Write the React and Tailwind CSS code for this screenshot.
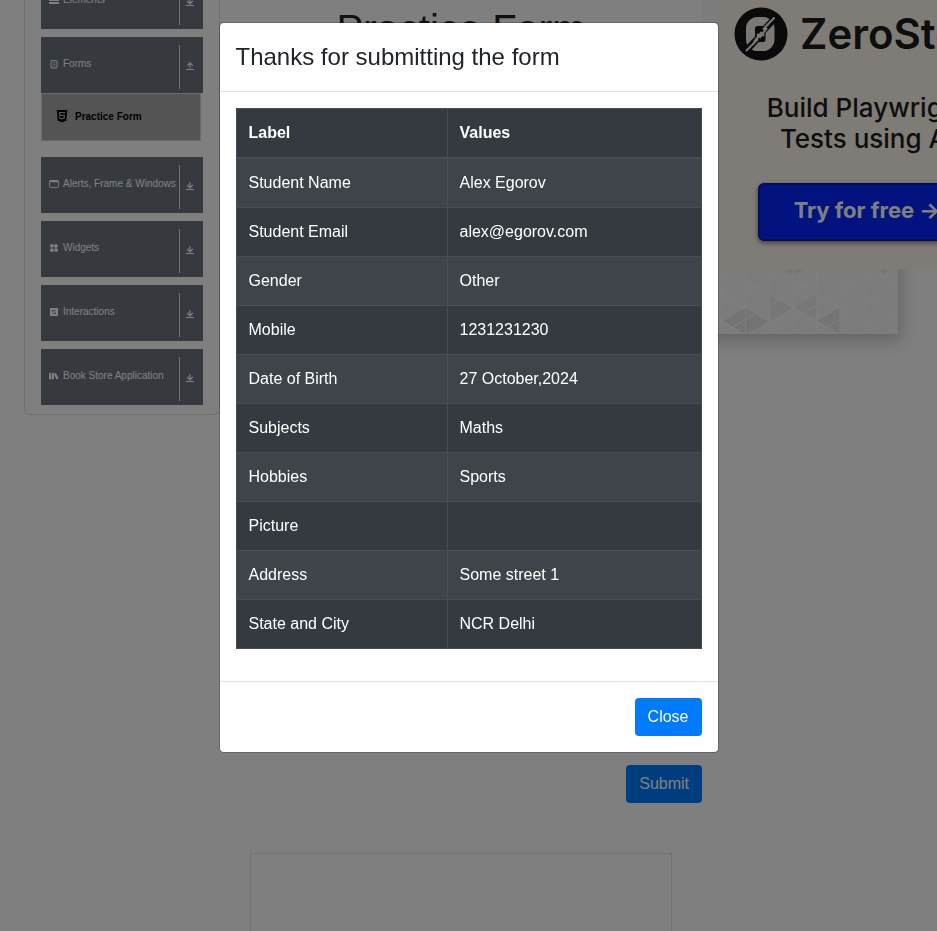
import React from "react";
import { ImBooks } from "react-icons/im";
import { FaHtml5 } from "react-icons/fa";
import { MdWidgets } from "react-icons/md";

function MenuIcon() {
  return (
    <svg viewBox="0 0 10 10" className="size-full" fill="currentColor">
      <path d="M0 1h10v2H0zM0 4h10v2H0zM0 7h10v2H0z" />
    </svg>
  );
}

function FormIcon() {
  return (
    <svg viewBox="0 0 10 10" className="size-full" fill="none" stroke="currentColor">
      <rect x="2" y="1.5" width="6" height="7.5" rx="0.8" />
      <path d="M3.5 3.5h3M3.5 5.2h3M3.5 7h3" strokeWidth="0.7" />
    </svg>
  );
}

function WindowIcon() {
  return (
    <svg viewBox="0 0 10 10" className="size-full" fill="none" stroke="currentColor">
      <rect x="0.6" y="1.5" width="8.8" height="7" rx="0.8" strokeWidth="0.9" />
      <path d="M0.8 2.4h8.4" strokeWidth="1.6" />
    </svg>
  );
}

function InteractionIcon() {
  return (
    <svg viewBox="0 0 10 10" className="size-full">
      <path fill="currentColor" fillRule="evenodd" d="M1 1h8v8H1zM3 3.2v2.2h.9V4.1h2.3V3.2zM4 5.9v.9h3V4.6h-.9v1.3z" />
    </svg>
  );
}

function ToggleIcon({ open }) {
  return (
    <svg viewBox="0 0 10 10" className="size-2.5" fill="none" stroke="currentColor">
      {open ? (
        <path d="M5 7.2V2M2.2 4.6L5 1.8l2.8 2.8" strokeWidth="1.2" />
      ) : (
        <path d="M5 1v5.4M2.2 4L5 6.8 7.8 4" strokeWidth="1.2" />
      )}
      <path d="M1 8.5h8" />
    </svg>
  );
}

function MenuGroup({ label, icon, open }) {
  return (
    <button type="button" aria-expanded={!!open} className="flex h-14 w-full shrink-0 bg-[#6c757d] py-2 pl-2 text-left text-[10px] leading-4 text-white">
      <span className="flex min-w-0 flex-1 items-center gap-1 self-center pb-0.5 whitespace-nowrap">
        <span className="size-2.5 shrink-0">{icon}</span>
        {label}
      </span>
      <span className="flex h-11 w-6 shrink-0 items-center justify-center border-l border-[#dee2e6] pr-1 pb-0.5">
        <ToggleIcon open={open} />
      </span>
    </button>
  );
}

function Sidebar() {
  return (
    <nav className="ml-6 flex w-[196px] shrink-0 flex-col gap-2 self-start rounded-md border border-t-0 border-[#dfdfdf] px-4 pb-[9px]">
      <MenuGroup label="Elements" icon={<MenuIcon />} />
      <div className="pb-2">
        <MenuGroup label="Forms" icon={<FormIcon />} open />
        <a href="#practice" className="mr-[2px] flex h-12 items-center gap-1.5 border border-[#d4d7da] bg-[#a9a9a9] pb-0.5 pl-[13px] text-[10px] font-bold text-black">
          <FaHtml5 className="size-3.5" />
          Practice Form
        </a>
      </div>
      <MenuGroup label="Alerts, Frame & Windows" icon={<WindowIcon />} />
      <MenuGroup label="Widgets" icon={<MdWidgets className="size-full" />} />
      <MenuGroup label="Interactions" icon={<InteractionIcon />} />
      <MenuGroup label="Book Store Application" icon={<ImBooks className="size-full" />} />
    </nav>
  );
}

function TrianglePattern() {
  return (
    <svg viewBox="0 0 180 65" className="block h-[65px] w-[180px]">
      <rect width="180" height="65" fill="#f8f8f8" />
      <g fill="#e8e8e8">
        <path d="M5 52.3L27.6 38.7 51.3 52.3 27.6 66z" />
        <path d="M98.7 52.3L122 38.7V66z" />
      </g>
      <g fill="#eeeeee">
        <path d="M51.3 25L75 38.7 51.3 52.3z" />
        <path d="M98.7 25L75 38.7l23.7 13.6z" />
        <path d="M63 0h24l-12 6z" />
        <path d="M155 0h14v6z" />
      </g>
      <g stroke="#ffffff" strokeWidth="1" fill="none">
        <path d="M4 0v65M27.6 0v65M51.3 0v65M75 0v65M98.7 0v65M122 0v65M146 0v65M170 0v65" />
        <path d="M-20 50.8L180 -64.7M-20 78.1L180 -37.4M-20 105.4L180 -10.1M-20 132.7L180 17.2M-20 160L180 44.5M-20 23.5L180 -92" />
        <path d="M-20 -43.5L180 72M-20 -16.2L180 99.3M-20 11.1L180 126.6M-20 38.4L180 153.9M-20 -70.8L180 44.7M-20 -98.1L180 17.4" />
      </g>
    </svg>
  );
}

function ZeroStepLogo() {
  return (
    <svg viewBox="0 0 54 54" className="size-[54px] shrink-0">
      <circle cx="27" cy="27" r="26.5" fill="#141414" />
      <rect x="16.5" y="14.5" width="19.5" height="25" rx="7" fill="none" stroke="#f4eee8" strokeWidth="9" />
      <path d="M10 46L25 30M28 25L43 9" stroke="#141414" strokeWidth="6.5" />
      <path d="M12 44L24 32M20 35l7-9 3 3M33 21l-7 9-3-3M29 22.5L40.5 10.5" stroke="#f4eee8" strokeWidth="2.2" fill="none" />
    </svg>
  );
}

function Promo() {
  return (
    <aside className="w-[235px] shrink-0 overflow-hidden pt-4 pb-10">
      <div className="w-[196px] bg-[#f8f8f8] pl-4 shadow-[0_4px_16px_4px_rgba(0,0,0,0.2)]">
        <div className="flex h-[280px] w-[298px] flex-col bg-[#fff6ed] px-4 pt-[18px] font-[Inter,sans-serif] text-[#1c1c1c]">
          <div className="flex items-center gap-3 text-[42px] leading-[54px] font-semibold">
            <ZeroStepLogo />
            ZeroStep
          </div>
          <p className="mt-[31px] text-center text-[26px] leading-[31px] font-medium">
            Build Playwright
            <br />
            Tests using AI
          </p>
          <button type="button" className="mt-[29px] h-[58px] w-[218px] self-center rounded-md border-2 border-[#0316c0] bg-[#0427ff] pb-1 text-[22px] font-bold whitespace-nowrap text-white shadow-[0_2px_5px_rgba(0,0,0,0.5)]">
            Try for free →
          </button>
        </div>
        <TrianglePattern />
      </div>
    </aside>
  );
}

function Page() {
  return (
    <div className="-mt-[27px] flex">
      <Sidebar />
      <main className="min-w-0 flex-1 pt-8">
        <h1 className="text-center text-[40px] leading-[48px] text-[#212529]">Practice Form</h1>
        <form className="flex min-h-[750px] items-end justify-end">
          <button type="button" className="h-[38px] rounded bg-[#007bff] px-[13px] text-base text-white">
            Submit
          </button>
        </form>
        <div className="mx-[30px] mt-[50px] h-[282px] border border-[#e6e6e6]" />
      </main>
      <Promo />
    </div>
  );
}

const rows = [
  ["Student Name", "Alex Egorov"],
  ["Student Email", "alex@egorov.com"],
  ["Gender", "Other"],
  ["Mobile", "1231231230"],
  ["Date of Birth", "27 October,2024"],
  ["Subjects", "Maths"],
  ["Hobbies", "Sports"],
  ["Picture", ""],
  ["Address", "Some street 1"],
  ["State and City", "NCR Delhi"],
];

function ResultDialog() {
  return (
    <div className="fixed inset-0 flex items-start justify-center bg-black/50 pt-[22px]">
      <section role="dialog" aria-modal="true" aria-labelledby="dialog-title" className="w-[500px] max-w-full rounded-[5px] border border-black/20 bg-white bg-clip-padding">
        <header className="border-b border-[#dee2e6] p-4">
          <h2 id="dialog-title" className="text-2xl leading-9">Thanks for submitting the form</h2>
        </header>
        <div className="p-4">
          <table className="mb-4 w-full border-collapse bg-[#343a40] text-left text-base leading-6 text-white">
            <thead>
              <tr>
                <th className="w-[211px] border border-b-2 border-[#454d55] p-3">Label</th>
                <th className="border border-b-2 border-[#454d55] p-3">Values</th>
              </tr>
            </thead>
            <tbody>
              {rows.map(([label, value]) => (
                <tr key={label} className="odd:bg-white/5">
                  <td className="border border-[#454d55] p-3">{label}</td>
                  <td className="border border-[#454d55] p-3">{value}</td>
                </tr>
              ))}
            </tbody>
          </table>
        </div>
        <footer className="flex justify-end border-t border-[#dee2e6] p-4">
          <button type="button" className="h-[38px] rounded bg-[#007bff] px-[13px] text-base text-white">
            Close
          </button>
        </footer>
      </section>
    </div>
  );
}

export default function App() {
  return (
    <div className="h-screen overflow-hidden bg-white font-['Liberation_Sans',Arial,sans-serif] text-[#212529]">
      <div className="flow-root">
        <Page />
      </div>
      <ResultDialog />
    </div>
  );
}
